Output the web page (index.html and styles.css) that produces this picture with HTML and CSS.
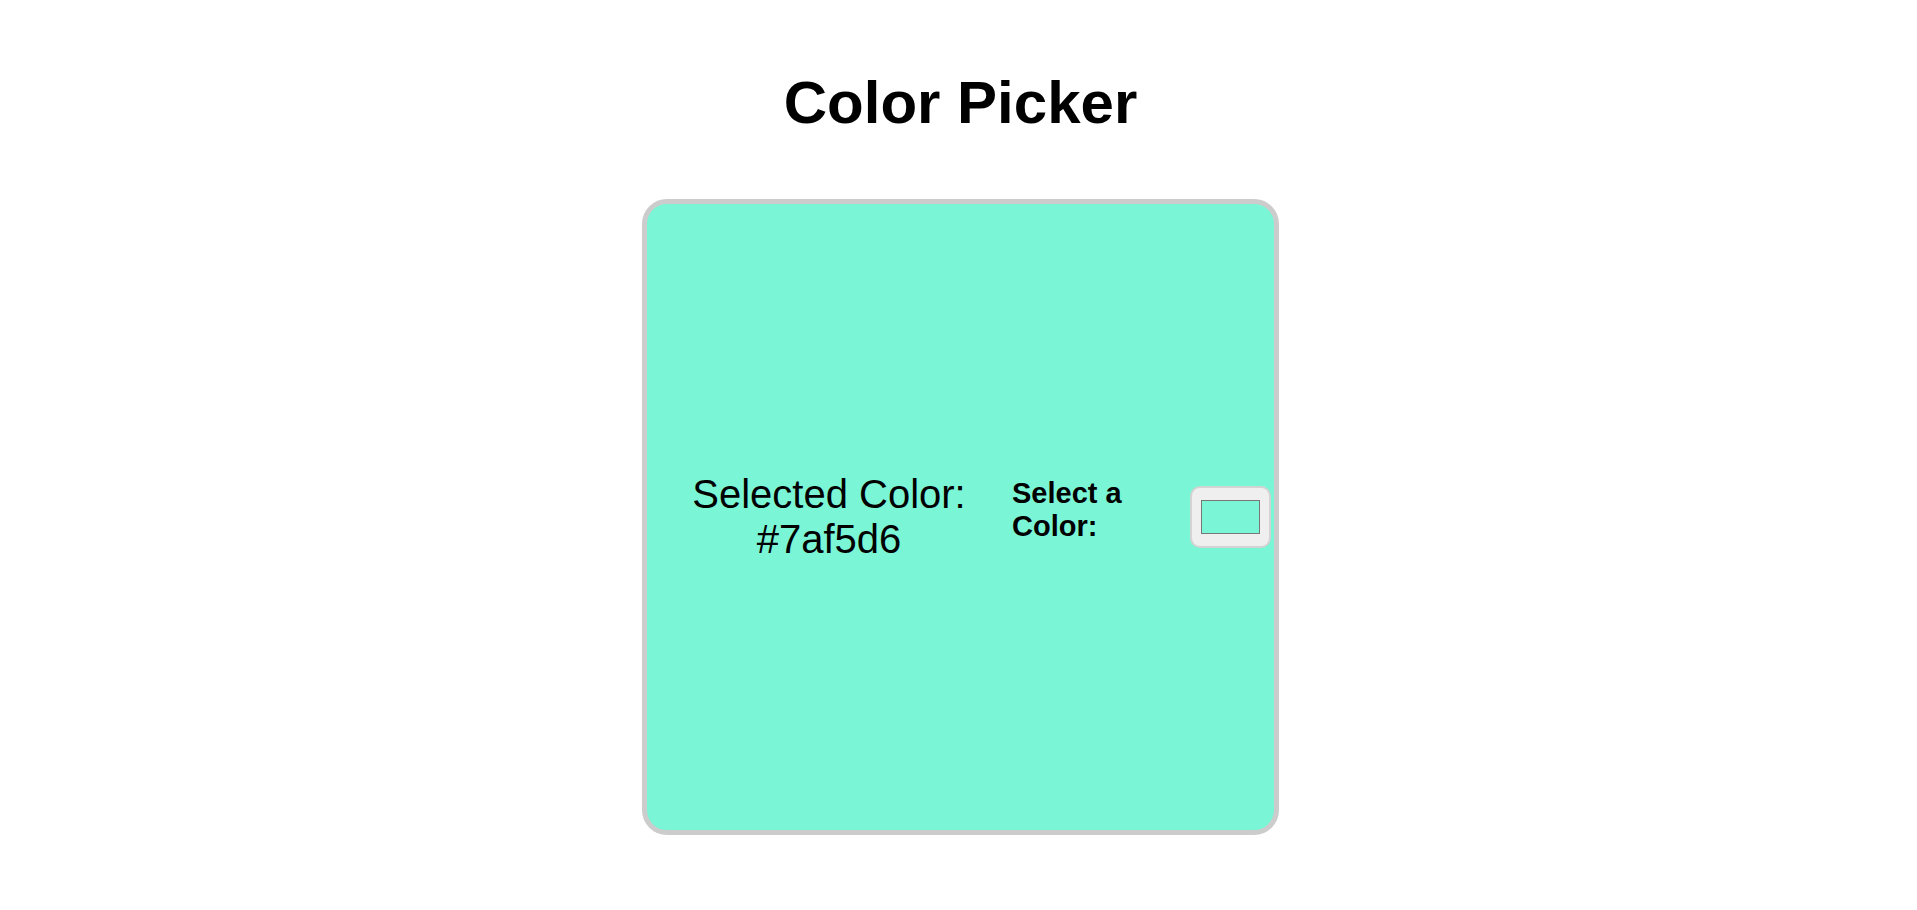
FILE: index.html
```html
<!DOCTYPE html>
<html lang="en">
<head>
    <meta charset="UTF-8">
    <meta name="viewport" content="width=device-width, initial-scale=1.0">
    <title>Color Picker</title>
    <link rel="stylesheet" href="styles.css">
</head>
<body>
    <div id="container">
        <h1 id="title">Color Picker</h1>
        <div id="picker-box">
            <div id="selected-color">
                Selected Color:<br>
                <span id="color-code">#7af5d6</span>
            </div>
            <label for="color-input" id="color-label">Select a Color:</label>
            <input type="color" id="color-input" value="#7af5d6">
        </div>
    </div>
</body>
</html>
```

FILE: styles.css
```css
body {
    margin: 0;
    padding-left: 4px;
    font-family: "Liberation Sans", Arial, Helvetica, sans-serif;
    color: #000000;
    background-color: #ffffff;
}
#container {
    display: flex;
    flex-direction: column;
    align-items: center;
    padding-top: 68px;
}
#title {
    margin: 0 0 62px 0;
    font-size: 60px;
    font-weight: bold;
}
#picker-box {
    box-sizing: border-box;
    width: 637px;
    height: 636px;
    display: flex;
    align-items: center;
    padding-left: 32px;
    background-color: #7af5d6;
    border: 5px solid #cccccc;
    border-radius: 25px;
}
#selected-color {
    width: 300px;
    text-align: center;
    font-size: 40px;
}
#color-label {
    width: 140px;
    margin-left: 33px;
    margin-bottom: 14px;
    font-size: 29px;
    font-weight: bold;
}
#color-input {
    box-sizing: border-box;
    width: 81px;
    height: 62px;
    margin: 0 0 0 38px;
    padding: 12px 9px;
    background-color: #efefef;
    border: 2px solid #d3d3d3;
    border-radius: 10px;
    cursor: pointer;
}
#color-input::-webkit-color-swatch-wrapper {
    padding: 0;
}
#color-input::-webkit-color-swatch {
    border: 1px solid #777777;
    border-radius: 0;
}
```
